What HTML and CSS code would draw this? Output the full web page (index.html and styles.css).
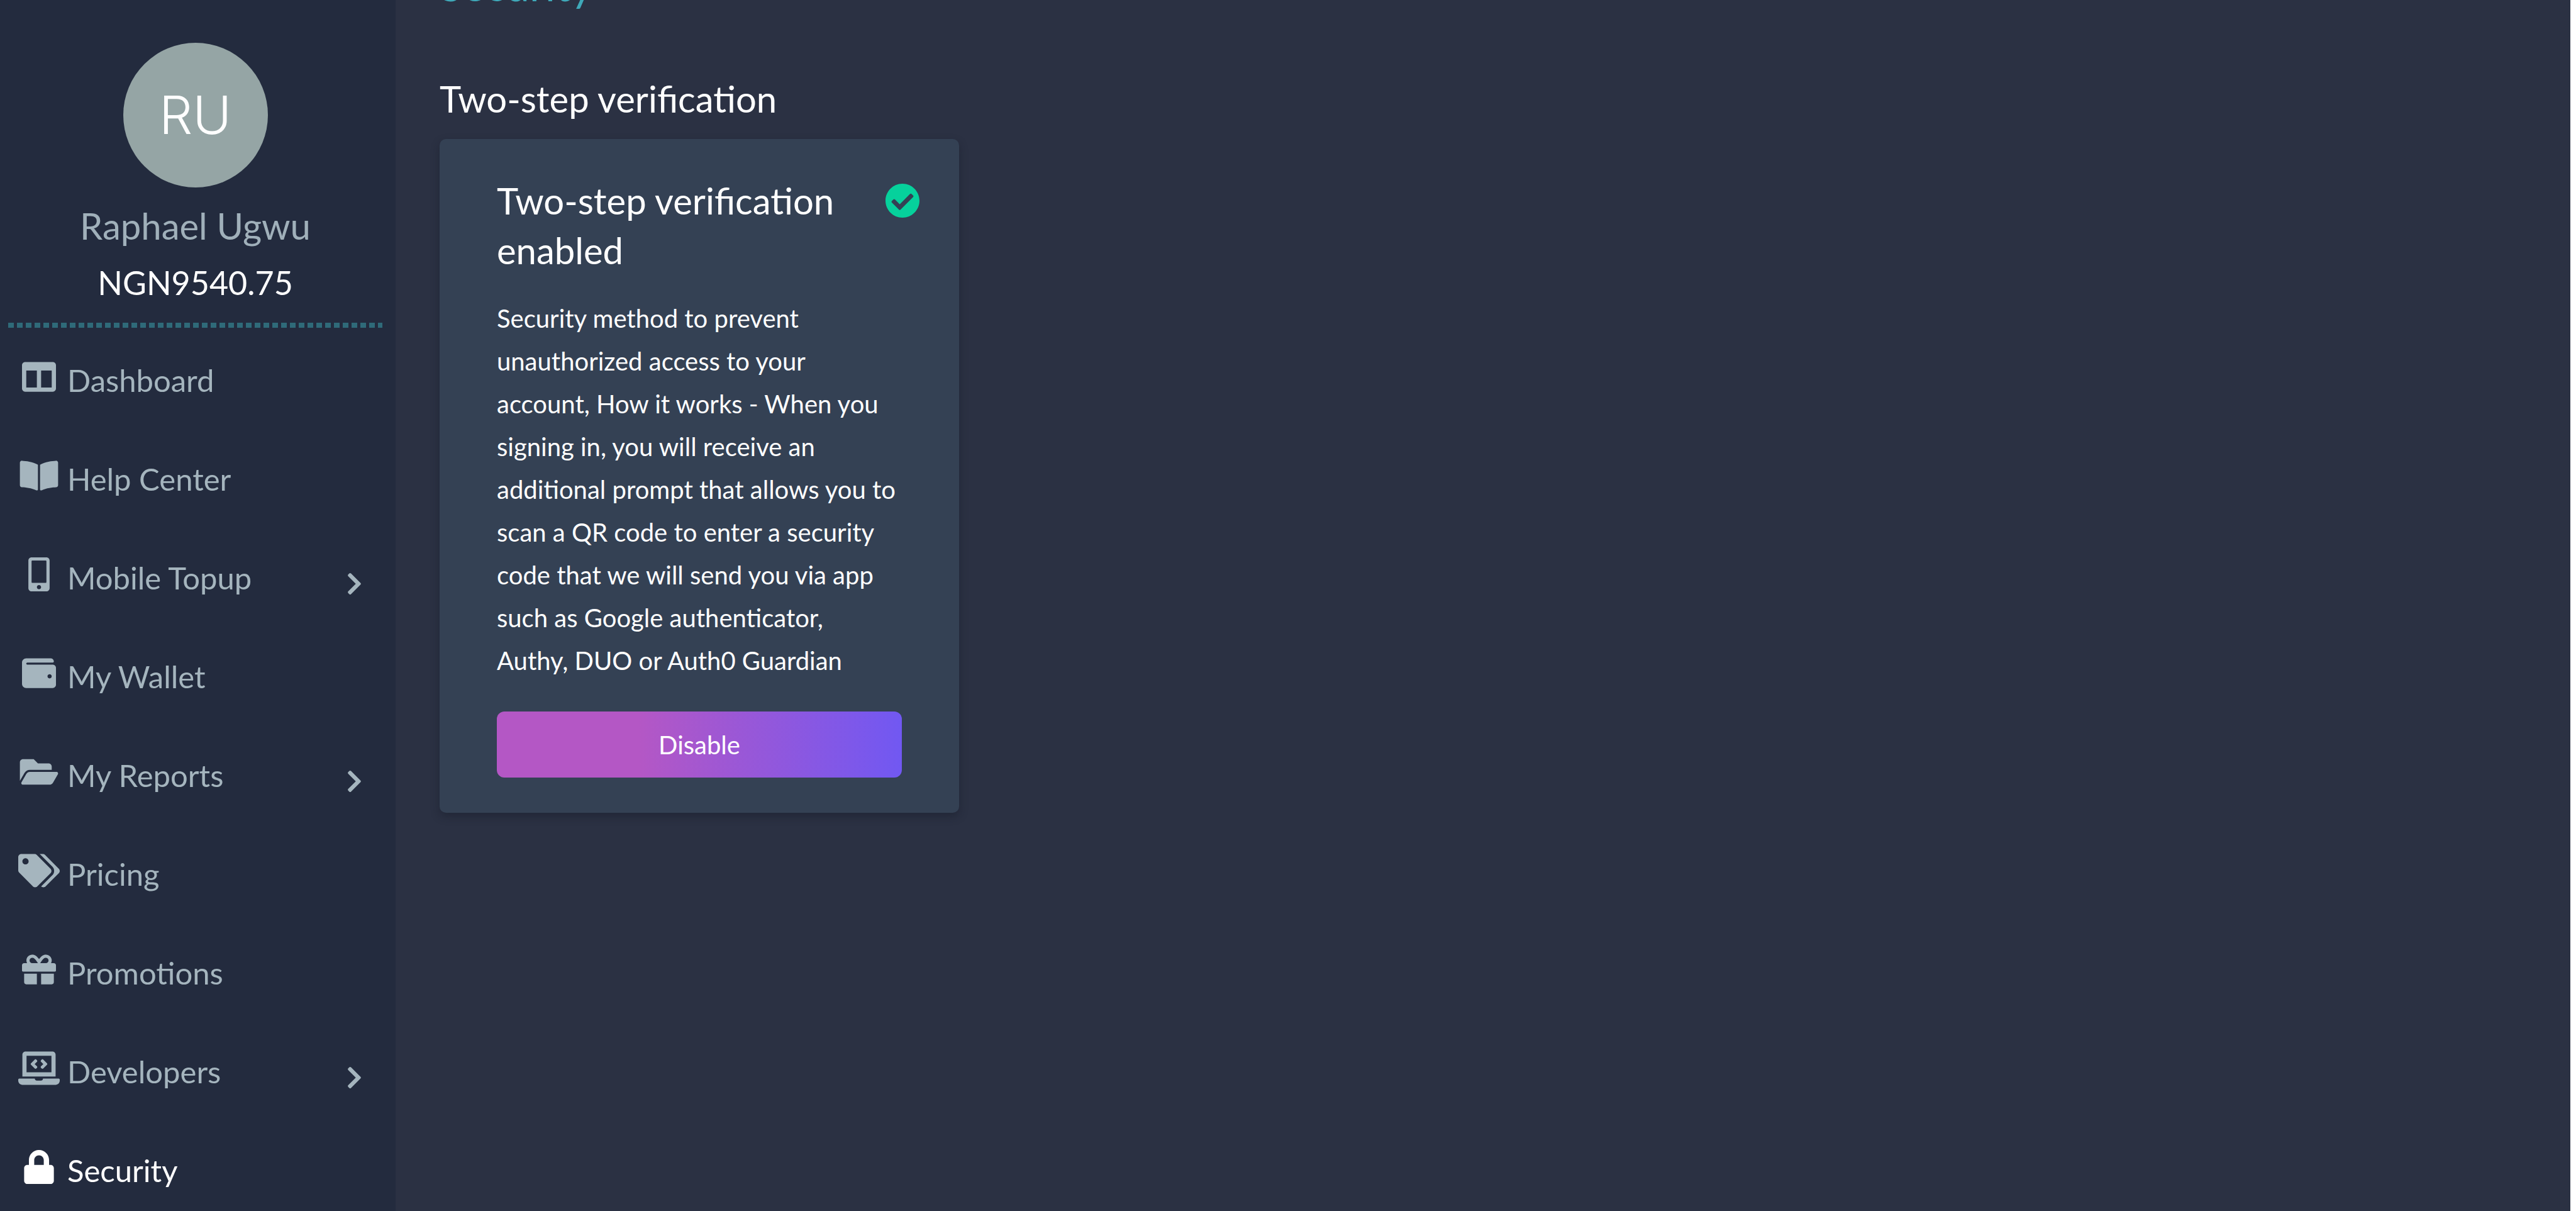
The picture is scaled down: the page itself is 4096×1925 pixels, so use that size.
FILE: index.html
```html
<!DOCTYPE html>
<html lang="en">
<head>
<meta charset="utf-8">
<title>Security</title>
<link rel="stylesheet" href="styles.css">
</head>
<body>
<div class="app">
  <aside class="sidebar">
    <div class="profile">
      <div class="avatar">RU</div>
      <div class="name">Raphael Ugwu</div>
      <div class="balance">NGN9540.75</div>
    </div>
    <div class="divider"></div>
    <nav class="nav">
      <a class="nav-item" href="#">
        <svg class="icon" viewBox="0 0 512 512"><path d="M464 32H48C21.49 32 0 53.49 0 80v352c0 26.51 21.49 48 48 48h416c26.51 0 48-21.49 48-48V80c0-26.51-21.49-48-48-48zM224 416H64V160h160v256zm224 0H288V160h160v256z"/></svg>
        <span class="label">Dashboard</span>
      </a>
      <a class="nav-item" href="#">
        <svg class="icon" viewBox="0 0 576 512"><path d="M542.22 32.05c-54.8 3.11-163.72 14.43-230.96 55.59-4.64 2.84-7.27 7.89-7.27 13.17v363.87c0 11.55 12.63 18.85 23.28 13.49 69.18-34.82 169.23-44.32 218.7-46.92 16.89-.89 30.02-14.43 30.02-30.66V62.75c.01-17.71-15.35-31.74-33.77-30.7zM264.73 87.64C197.5 46.48 88.58 35.17 33.78 32.05 15.36 31.01 0 45.04 0 62.75V400.6c0 16.24 13.13 29.78 30.02 30.66 49.49 2.6 149.59 12.11 218.77 46.95 10.62 5.35 23.21-1.94 23.21-13.46V100.63c0-5.29-2.62-10.14-7.27-12.99z"/></svg>
        <span class="label">Help Center</span>
      </a>
      <a class="nav-item" href="#">
        <svg class="icon" viewBox="0 0 320 512"><path d="M272 0H48C21.5 0 0 21.5 0 48v416c0 26.5 21.5 48 48 48h224c26.5 0 48-21.5 48-48V48c0-26.5-21.5-48-48-48zM160 480c-17.7 0-32-14.3-32-32s14.3-32 32-32 32 14.3 32 32-14.3 32-32 32zm112-108c0 6.600-5.400 12-12 12H60c-6.600 0-12-5.400-12-12V60c0-6.600 5.400-12 12-12h200c6.600 0 12 5.400 12 12v312z"/></svg>
        <span class="label">Mobile Topup</span>
        <svg class="chevron" viewBox="0 0 320 512"><path d="M285.476 272.971L91.132 467.314c-9.373 9.373-24.569 9.373-33.941 0l-22.667-22.667c-9.357-9.357-9.375-24.522-.04-33.901L188.505 256 34.484 101.255c-9.335-9.379-9.317-24.544.04-33.901l22.667-22.667c9.373-9.373 24.569-9.373 33.941 0L285.475 239.03c9.373 9.372 9.373 24.568.001 33.941z"/></svg>
      </a>
      <a class="nav-item" href="#">
        <svg class="icon" viewBox="0 0 512 512"><path d="M461.2 128H80c-8.84 0-16-7.16-16-16s7.16-16 16-16h384c8.84 0 16-7.16 16-16 0-26.51-21.49-48-48-48H64C28.65 32 0 60.65 0 96v320c0 35.35 28.65 64 64 64h397.2c28.02 0 50.8-21.53 50.8-48V176c0-26.47-22.78-48-50.8-48zM416 336c-17.67 0-32-14.33-32-32s14.33-32 32-32 32 14.33 32 32-14.33 32-32 32z"/></svg>
        <span class="label">My Wallet</span>
      </a>
      <a class="nav-item" href="#">
        <svg class="icon" viewBox="0 0 576 512"><path d="M572.694 292.093L500.27 416.248A63.997 63.997 0 0 1 444.989 448H45.025c-18.523 0-30.064-20.093-20.731-36.093l72.424-124.155A64 64 0 0 1 152 256h399.964c18.523 0 30.064 20.093 20.73 36.093zM152 224h328v-48c0-26.51-21.49-48-48-48H272l-64-64H48C21.49 64 0 85.49 0 112v278.046l69.077-118.418C86.214 242.25 117.989 224 152 224z"/></svg>
        <span class="label">My Reports</span>
        <svg class="chevron" viewBox="0 0 320 512"><path d="M285.476 272.971L91.132 467.314c-9.373 9.373-24.569 9.373-33.941 0l-22.667-22.667c-9.357-9.357-9.375-24.522-.04-33.901L188.505 256 34.484 101.255c-9.335-9.379-9.317-24.544.04-33.901l22.667-22.667c9.373-9.373 24.569-9.373 33.941 0L285.475 239.03c9.373 9.372 9.373 24.568.001 33.941z"/></svg>
      </a>
      <a class="nav-item" href="#">
        <svg class="icon" viewBox="0 0 640 512"><path d="M497.941 225.941L286.059 14.059A48 48 0 0 0 252.118 0H48C21.49 0 0 21.49 0 48v204.118a48 48 0 0 0 14.059 33.941l211.882 211.882c18.744 18.745 49.136 18.746 67.882 0l204.118-204.118c18.745-18.745 18.745-49.137 0-67.882zM112 160c-26.51 0-48-21.49-48-48s21.49-48 48-48 48 21.49 48 48-21.49 48-48 48zm513.941 133.823L421.823 497.941c-18.745 18.745-49.137 18.745-67.882 0l-.36-.36L527.64 323.522c16.999-16.999 26.36-39.6 26.36-63.64s-9.362-46.641-26.36-63.64L331.397 0h48.721a48 48 0 0 1 33.941 14.059l211.882 211.882c18.745 18.745 18.745 49.137 0 67.882z"/></svg>
        <span class="label">Pricing</span>
      </a>
      <a class="nav-item" href="#">
        <svg class="icon" viewBox="0 0 512 512"><path d="M32 448c0 17.7 14.3 32 32 32h160V320H32v128zm256 32h160c17.7 0 32-14.3 32-32V320H288v160zm192-320h-42.1c6.2-12.1 10.1-25.5 10.1-40 0-48.5-39.5-88-88-88-41.6 0-68.5 21.3-103 68.3-34.5-47-61.4-68.3-103-68.3-48.5 0-88 39.5-88 88 0 14.5 3.8 27.9 10.1 40H32c-17.7 0-32 14.3-32 32v80c0 8.8 7.2 16 16 16h480c8.8 0 16-7.2 16-16v-80c0-17.7-14.3-32-32-32zm-326.1 0c-22.1 0-40-17.9-40-40s17.9-40 40-40c19.9 0 34.6 3.3 86.1 80h-86.1zm206.1 0h-86.1c51.4-76.5 65.7-80 86.1-80 22.1 0 40 17.9 40 40s-17.9 40-40 40z"/></svg>
        <span class="label">Promotions</span>
      </a>
      <a class="nav-item" href="#">
        <svg class="icon" viewBox="0 0 640 512"><path d="M255.03 261.65c6.25 6.25 16.38 6.25 22.63 0l11.31-11.31c6.25-6.25 6.25-16.38 0-22.63L253.25 192l35.71-35.72c6.25-6.25 6.25-16.38 0-22.63l-11.31-11.31c-6.25-6.25-16.38-6.25-22.63 0l-58.34 58.34c-6.25 6.25-6.25 16.38 0 22.63l58.35 58.34zm96.01-11.3l11.31 11.31c6.25 6.25 16.38 6.25 22.63 0l58.34-58.34c6.25-6.25 6.25-16.38 0-22.63l-58.34-58.34c-6.25-6.25-16.38-6.25-22.63 0l-11.31 11.31c-6.25 6.25-6.25 16.38 0 22.63L386.75 192l-35.71 35.72c-6.25 6.25-6.25 16.38 0 22.63zM624 416H381.54c-.74 19.81-14.71 32-32.74 32H288c-18.69 0-33.02-17.47-32.77-32H16c-8.8 0-16 7.2-16 16v16c0 35.2 28.8 64 64 64h512c35.2 0 64-28.8 64-64v-16c0-8.8-7.2-16-16-16zM576 48c0-26.4-21.6-48-48-48H112C85.6 0 64 21.6 64 48v336h512V48zm-64 272H128V64h384v256z"/></svg>
        <span class="label">Developers</span>
        <svg class="chevron" viewBox="0 0 320 512"><path d="M285.476 272.971L91.132 467.314c-9.373 9.373-24.569 9.373-33.941 0l-22.667-22.667c-9.357-9.357-9.375-24.522-.04-33.901L188.505 256 34.484 101.255c-9.335-9.379-9.317-24.544.04-33.901l22.667-22.667c9.373-9.373 24.569-9.373 33.941 0L285.475 239.03c9.373 9.372 9.373 24.568.001 33.941z"/></svg>
      </a>
      <a class="nav-item active" href="#" aria-current="page">
        <svg class="icon" viewBox="0 0 448 512"><path d="M400 224h-24v-72C376 68.2 307.8 0 224 0S72 68.2 72 152v72H48c-26.5 0-48 21.5-48 48v192c0 26.5 21.5 48 48 48h352c26.5 0 48-21.5 48-48V272c0-26.5-21.5-48-48-48zm-104 0H152v-72c0-39.7 32.3-72 72-72s72 32.3 72 72v72z"/></svg>
        <span class="label">Security</span>
      </a>
    </nav>
  </aside>
  <main class="main">
    <h1 class="page-title">Security</h1>
    <h2 class="section-title">Two-step verification</h2>
    <section class="card">
      <div class="card-head">
        <h3 class="card-title">Two-step verification enabled</h3>
        <svg class="check" viewBox="8 8 496 496" role="img" aria-label="Enabled"><path d="M504 256c0 136.967-111.033 248-248 248S8 392.967 8 256 119.033 8 256 8s248 111.033 248 248zM227.314 387.314l184-184c6.248-6.248 6.248-16.379 0-22.627l-22.627-22.627c-6.248-6.249-16.379-6.249-22.628 0L216 308.118l-70.059-70.059c-6.248-6.248-16.379-6.248-22.628 0l-22.627 22.627c-6.248 6.248-6.248 16.379 0 22.627l104 104c6.249 6.249 16.379 6.249 22.628.001z"/></svg>
      </div>
      <p class="card-text">Security method to prevent unauthorized access to your account, How it works - When you signing in, you will receive an additional prompt that allows you to scan a QR code to enter a security code that we will send you via app such as Google authenticator, Authy, DUO or Auth0 Guardian</p>
      <button class="button" type="button">Disable</button>
    </section>
  </main>
</div>
</body>
</html>
```

FILE: styles.css
```css
* {
  box-sizing: border-box;
  margin: 0;
}

body {
  background: #fff;
  color: #fff;
  font-family: Lato, "Liberation Sans", sans-serif;
}

.app {
  display: flex;
  height: 100vh;
  margin-right: 9px;
  overflow: hidden;
  background: #2b3143;
}

.sidebar {
  flex: 0 0 629px;
  padding: 68px 21px 0 13px;
  background: #232b3e;
}

.profile {
  display: flex;
  flex-direction: column;
  align-items: center;
}

.avatar {
  display: flex;
  align-items: center;
  justify-content: center;
  width: 230px;
  height: 230px;
  border-radius: 50%;
  background: #95a5a5;
  font: 300 84px/100px Inter, sans-serif;
}

.name {
  margin-top: 26px;
  color: #a0b0ba;
  font-size: 58px;
  line-height: 70px;
}

.balance {
  margin-top: 24px;
  font-size: 52px;
  line-height: 62px;
}

.divider {
  height: 8px;
  margin: 33px 0 4px;
  background: repeating-linear-gradient(90deg, #2f6a79 0 9px, transparent 9px 14px);
}

.nav-item {
  display: flex;
  align-items: center;
  gap: 12px;
  height: 157px;
  padding: 0 32px 0 16px;
  color: #a5b5be;
  font-size: 49px;
  line-height: 60px;
  text-decoration: none;
}

.nav-item.active {
  color: #fff;
}

.label {
  flex: 1;
}

.icon {
  width: 66px;
  height: 54px;
  margin-bottom: 10px;
  fill: currentColor;
}

.chevron {
  width: 25px;
  height: 40px;
  margin-top: 20px;
  fill: currentColor;
}

/* the view is scrolled, so the page title runs off the top */
.main {
  flex: 1;
  margin-top: -64px;
  padding-left: 70px;
}

.page-title {
  color: #3fa9b9;
  font-size: 68px;
  font-weight: 400;
  line-height: 80px;
}

.section-title {
  margin: 106px 0 29px;
  font-size: 58px;
  font-weight: 400;
  line-height: 70px;
}

.card {
  width: 826px;
  padding: 58px 91px 56px;
  border-radius: 10px;
  background: #344154;
  box-shadow: 0 6px 14px rgba(20, 25, 38, 0.4);
}

.card-head {
  display: flex;
  align-items: flex-start;
  margin-right: -28px;
}

.card-title {
  flex: 1;
  font-size: 58px;
  font-weight: 400;
  line-height: 79px;
}

.check {
  width: 54px;
  height: 54px;
  margin-top: 13px;
  fill: #06d19c;
}

.card-text {
  margin: 35px 6px 47px 0;
  font-size: 40px;
  line-height: 68px;
}

.button {
  display: block;
  width: 100%;
  height: 105px;
  border: 0;
  border-radius: 12px;
  background: linear-gradient(90deg, #b457c5 35%, #7158f2);
  color: #fff;
  font: 40px/60px Lato, "Liberation Sans", sans-serif;
}
```
